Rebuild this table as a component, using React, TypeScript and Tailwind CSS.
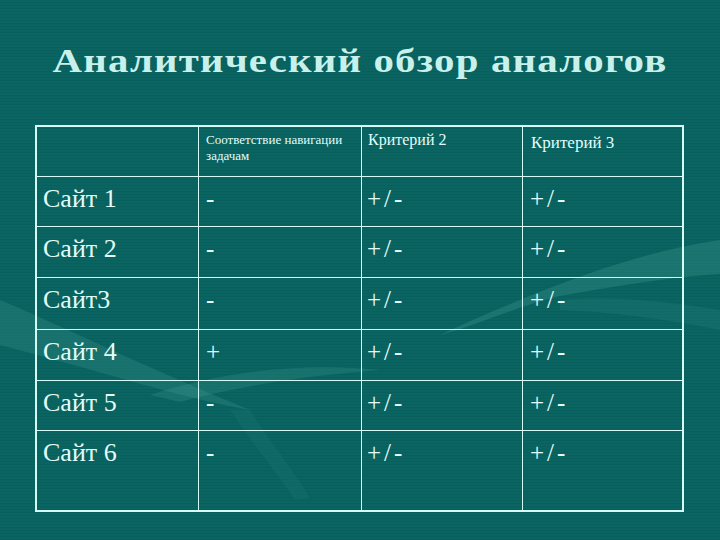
import React from "react";

const rows = [
  { label: "Сайт 1", v: ["-", "+/-", "+/-"] },
  { label: "Сайт 2", v: ["-", "+/-", "+/-"] },
  { label: "Сайт3", v: ["-", "+/-", "+/-"] },
  { label: "Сайт 4", v: ["+", "+/-", "+/-"] },
  { label: "Сайт 5", v: ["-", "+/-", "+/-"] },
  { label: "Сайт 6", v: ["-", "+/-", "+/-"] },
];

const heights = ["h-[50px]", "h-[51px]", "h-[52px]", "h-[51px]", "h-[50px]", "h-[79px]"];

function Cell({ children, last, w, className }: { children?: React.ReactNode; last?: boolean; w: string; className?: string }) {
  return (
    <div className={`${w} shrink-0 ${last ? "" : "border-r-[1.5px]"} border-[#d6fbf7] ${className ?? ""}`}>
      {children}
    </div>
  );
}

export default function App() {
  const widths = ["w-[162px]", "w-[163px]", "w-[161px]", "w-[159px]"];
  const val = "pt-[9px] text-[25px] leading-[26px] font-['Liberation_Serif',serif] font-light";
  return (
    <div className="relative w-[720px] h-[540px] overflow-hidden bg-[#0a6461] font-['Liberation_Serif',serif]">
      <div className="absolute inset-0 bg-[repeating-linear-gradient(0deg,rgba(0,0,0,0.05)_0px,rgba(0,0,0,0.05)_1px,transparent_1px,transparent_3px)]" />
      <svg className="absolute inset-0" width="720" height="540" viewBox="0 0 720 540">
        <path d="M0 300 C 60 325, 140 365, 250 410 C 180 398, 90 368, 0 345 Z" fill="#4fa9a3" opacity="0.22" />
        <path d="M150 395 C 220 372, 300 362, 380 370 C 300 376, 230 388, 180 402 Z" fill="#4fa9a3" opacity="0.2" />
        <path d="M720 240 C 640 252, 560 280, 440 335 C 470 328, 520 305, 560 296 C 620 285, 680 276, 720 274 Z" fill="#5ab4ad" opacity="0.22" />
        <path d="M560 300 C 610 296, 660 300, 720 310 L 720 330 C 660 318, 610 312, 560 310 Z" fill="#4fa9a3" opacity="0.12" />
        <path d="M230 410 C 250 440, 275 470, 295 500 L 310 498 C 290 465, 265 435, 250 410 Z" fill="#3d9a94" opacity="0.12" />
      </svg>

      <div className="relative">
        <h1 className="pt-[44px] text-center text-[34px] leading-[34px] font-bold tracking-[1px] scale-x-[1.2] text-[#c9f1ec]">
          Аналитический обзор аналогов
        </h1>

        <div className="ml-[35px] mt-[47px] w-[649px] border-2 border-[#d6fbf7] text-[#e3fdfa]">
          <div className="flex h-[50px] border-b-[1.5px] border-[#d6fbf7]">
            <Cell w={widths[0]} />
            <Cell w={widths[1]} className="pl-[7px] pt-[5px] text-[13px] leading-[16px]">
              Соответствие навигации задачам
            </Cell>
            <Cell w={widths[2]} className="pl-[6px] pt-[3px] text-[16px] leading-[20px]">
              Критерий 2
            </Cell>
            <Cell w={widths[3]} last className="pl-[8px] pt-[6px] text-[17px] leading-[20px]">
              Критерий 3
            </Cell>
          </div>
          {rows.map((r, i) => (
            <div
              key={r.label}
              className={`flex ${heights[i]} ${i === rows.length - 1 ? "" : "border-b-[1.5px]"} border-[#d6fbf7]`}
            >
              <Cell w={widths[0]} className="pl-[6px] pt-[9px] text-[26px] leading-[26px]">
                {r.label}
              </Cell>
              <Cell w={widths[1]} className={`pl-[7px] ${val}`}>
                {r.v[0]}
              </Cell>
              <Cell w={widths[2]} className={`pl-[5px] tracking-[3px] ${val}`}>
                {r.v[1]}
              </Cell>
              <Cell w={widths[3]} last className={`pl-[7px] tracking-[3px] ${val}`}>
                {r.v[2]}
              </Cell>
            </div>
          ))}
        </div>
      </div>
    </div>
  );
}
